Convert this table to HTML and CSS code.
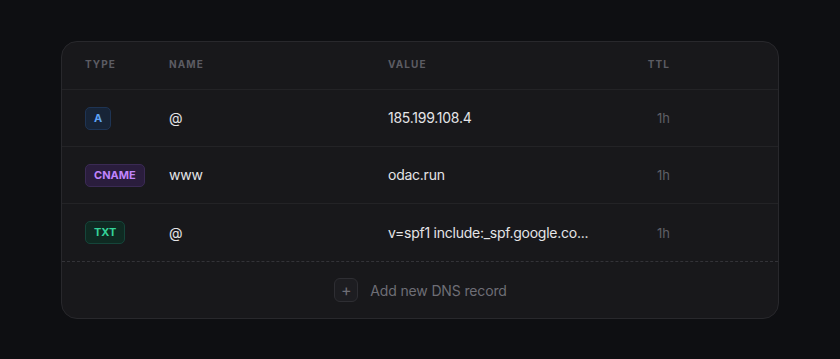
FILE: index.html
```html
<!DOCTYPE html>
<html lang="en">
<head>
<meta charset="UTF-8">
<meta name="viewport" content="width=device-width, initial-scale=1.0">
<title>DNS records</title>
<link rel="stylesheet" href="styles.css">
</head>
<body>
  <div class="card">
    <!-- column titles -->
    <div class="row head">
      <div>Type</div>
      <div>Name</div>
      <div>Value</div>
      <div class="ttl">TTL</div>
      <div></div>
    </div>

    <div class="row">
      <div><span class="badge badge-a">A</span></div>
      <div class="cell">@</div>
      <div class="cell">185.199.108.4</div>
      <div class="ttl muted">1h</div>
      <div></div>
    </div>
    <div class="row">
      <div><span class="badge badge-cname">CNAME</span></div>
      <div class="cell">www</div>
      <div class="cell">odac.run</div>
      <div class="ttl muted">1h</div>
      <div></div>
    </div>
    <div class="row last">
      <div><span class="badge badge-txt">TXT</span></div>
      <div class="cell">@</div>
      <div class="cell">v=spf1 include:_spf.google.co...</div>
      <div class="ttl muted">1h</div>
      <div></div>
    </div>

    <div class="add-row">
      <span class="plus">+</span>
      <span class="add-text">Add new DNS record</span>
    </div>
  </div>
</body>
</html>
```

FILE: styles.css
```css
body {
  margin: 0;
  padding: 41px 61px;
  background: #0e0f12;
  font-family: Inter, "Noto Sans", sans-serif;
  color: #e4e4e7;
}

.card {
  background: #18181b;
  border: 1px solid #28282c;
  border-radius: 16px;
  overflow: hidden;
}

.row {
  display: grid;
  grid-template-columns: 84px 219px 1fr 40px 108px;
  align-items: center;
  padding-left: 23px;
  height: 56px;
  border-bottom: 1px solid #232326;
  font-size: 14px;
}

.row.head {
  height: 44px;
  padding-bottom: 3px;
  font-size: 10px;
  font-weight: 700;
  letter-spacing: 1.1px;
  text-transform: uppercase;
  color: #5c5c63;
}

.row.last {
  height: 57px;
  border-bottom: 1px dashed #333338;
}

.cell {
  letter-spacing: -0.25px;
  padding-bottom: 1px;
}

.ttl { text-align: right; }
.muted { color: #5f5f66; font-size: 13px; }

.badge {
  display: inline-block;
  font-size: 11px;
  font-weight: 700;
  line-height: 21px;
  padding: 0 8px;
  border-radius: 5px;
  border: 1px solid;
}
.badge-a { background: #172437; border-color: #1e3454; color: #5ea2f5; }
.badge-cname { background: #2a1d3d; border-color: #3a2a54; color: #c084fc; }
.badge-txt { background: #0f2a22; border-color: #15453a; color: #34d399; }

.add-row {
  display: flex;
  align-items: center;
  justify-content: center;
  gap: 12px;
  height: 56px;
  padding-left: 1px;
  font-size: 14px;
  color: #6e6e76;
}

.add-text { letter-spacing: -0.15px; }

.plus {
  width: 22px;
  height: 22px;
  border: 1px solid #2e2e33;
  border-radius: 6px;
  background: #1d1d21;
  display: flex;
  align-items: center;
  justify-content: center;
  font-size: 16px;
  color: #6e6e76;
}
```
